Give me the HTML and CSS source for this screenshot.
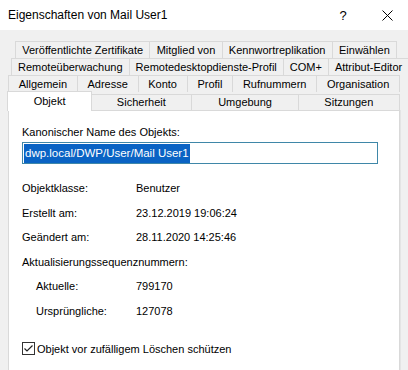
FILE: index.html
```html
<!DOCTYPE html>
<html lang="de">
<head>
    <meta charset="UTF-8">
    <title>Eigenschaften von Mail User1</title>
    <link rel="stylesheet" href="styles.css">
</head>
<body>

<div class="titlebar">
    <span class="title">Eigenschaften von Mail User1</span>
    <span class="help">?</span>
    <span class="close">
        <svg width="11" height="11" viewBox="0 0 11 11"><path d="M0.5 0.5 L10.5 10.5 M10.5 0.5 L0.5 10.5" stroke="#000" stroke-width="1" fill="none"/></svg>
    </span>
</div>

<div class="dialog">
    <!-- tab rows, selected row sits at the bottom -->
    <div class="tabs">
        <div class="tab-row row1">
            <div class="tab">Veröffentlichte Zertifikate</div>
            <div class="tab">Mitglied von</div>
            <div class="tab">Kennwortreplikation</div>
            <div class="tab">Einwählen</div>
        </div>
        <div class="tab-row row2">
            <div class="tab">Remoteüberwachung</div>
            <div class="tab">Remotedesktopdienste-Profil</div>
            <div class="tab">COM+</div>
            <div class="tab">Attribut-Editor</div>
        </div>
        <div class="tab-row row3">
            <div class="tab">Allgemein</div>
            <div class="tab">Adresse</div>
            <div class="tab">Konto</div>
            <div class="tab">Profil</div>
            <div class="tab">Rufnummern</div>
            <div class="tab">Organisation</div>
        </div>
        <div class="tab-row row4">
            <div class="tab active">Objekt</div>
            <div class="tab">Sicherheit</div>
            <div class="tab">Umgebung</div>
            <div class="tab">Sitzungen</div>
        </div>
    </div>

    <div class="panel">
        <div class="label">Kanonischer Name des Objekts:</div>
        <div class="field"><span class="selected">dwp.local/DWP/User/Mail User1</span></div>

        <div class="info">
            <div>Objektklasse:</div><div>Benutzer</div>
            <div>Erstellt am:</div><div>23.12.2019 19:06:24</div>
            <div>Geändert am:</div><div>28.11.2020 14:25:46</div>
            <div class="wide">Aktualisierungssequenznummern:</div>
            <div class="sub">Aktuelle:</div><div>799170</div>
            <div class="sub">Ursprüngliche:</div><div>127078</div>
        </div>

        <div class="check-row">
            <svg class="checkbox" width="13" height="13" viewBox="0 0 13 13">
                <rect x="0.5" y="0.5" width="12" height="12" fill="#fff" stroke="#333"/>
                <path d="M2.5 6.5 L5 9 L10.5 3.5" stroke="#222" stroke-width="1.2" fill="none"/>
            </svg>
            <span>Objekt vor zufälligem Löschen schützen</span>
        </div>
    </div>
</div>

</body>
</html>
```

FILE: styles.css
```css
body {
    margin: 0;
    padding: 0;
    width: 408px;
    height: 370px;
    overflow: hidden;
    background-color: #f0f0f0;
    font-family: "Liberation Sans", Arial, sans-serif;
    font-size: 11px;
    color: #000;
}
.titlebar {
    height: 30px;
    background-color: #fff;
    display: flex;
    align-items: center;
    padding-left: 8px;
}
.title {
    font-size: 12px;
    flex: 1;
}
.help {
    font-size: 13px;
    width: 50px;
    text-align: center;
    margin-right: -2px;
}
.close {
    width: 42px;
    display: flex;
    justify-content: center;
}
.dialog {
    padding: 11px 8px 0 8px;
}
.tab-row {
    display: flex;
    height: 17px;
}
.row1 {
    margin-left: 7px;
    margin-right: 3px;
}
.row2 {
    margin-left: 3px;
}
.row4 {
    height: 18px;
    align-items: flex-end;
}
.tab {
    flex: 1 1 auto;
    padding: 0 6px;
    border: 1px solid #d9d9d9;
    border-bottom: none;
    margin-left: -1px;
    text-align: center;
    line-height: 16px;
    height: 17px;
    box-sizing: border-box;
    white-space: nowrap;
}
.tab:first-child {
    margin-left: 0;
}
.row4 .tab {
    height: 16px;
    line-height: 15px;
}
.row4 .tab.active {
    height: 20px;
    line-height: 18px;
    background-color: #fff;
    margin: 0 -1px -1px -1px;
    position: relative;
    z-index: 1;
}
.panel {
    background-color: #fff;
    border: 1px solid #d9d9d9;
    border-bottom: none;
    height: 260px;
    box-sizing: border-box;
    padding: 15px 13px 0 13px;
    box-shadow: 1px 0 0 #e4e4e4;
}
.label {
    line-height: 13px;
}
.field {
    margin-top: 3px;
    width: 356px;
    height: 22px;
    box-sizing: border-box;
    border: 1px solid #3f87a8;
    padding: 1px 0 0 1px;
    font-size: 11.5px;
}
.selected {
    display: inline-block;
    background-color: #0a63c4;
    color: #fff;
    line-height: 19px;
    padding: 0 1px;
}
.info {
    margin-top: 12px;
    display: grid;
    grid-template-columns: 114px auto;
    grid-auto-rows: 24.5px;
    align-items: center;
}
.info .wide {
    grid-column: 1 / 3;
}
.info .sub {
    padding-left: 14px;
}
.check-row {
    margin-top: 19px;
    display: flex;
    align-items: center;
    gap: 2px;
}
.checkbox {
    display: block;
}
```
